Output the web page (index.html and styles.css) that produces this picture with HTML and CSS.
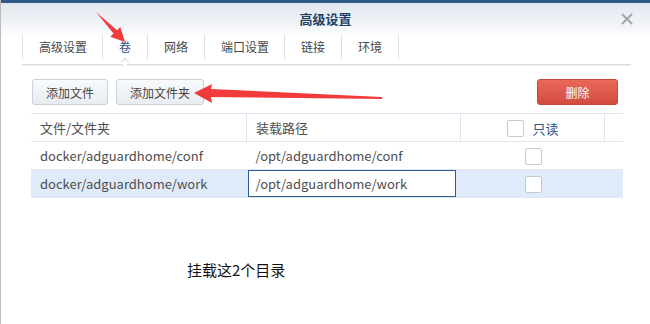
FILE: index.html
```html
<!DOCTYPE html>
<html lang="zh-CN">
<head>
    <meta charset="UTF-8">
    <meta name="viewport" content="width=device-width, initial-scale=1.0">
    <title>高级设置</title>
    <link rel="stylesheet" href="styles.css">
</head>
<body>
    <div class="win">
        <div class="win_bar"></div>
        <div class="win_head">
            <h1 class="win_title">高级设置</h1>
            <a href="#" class="win_close">
                <svg width="14" height="14" viewBox="0 0 14 14"><path d="M2 2 L12 12 M12 2 L2 12" stroke="#a3a7ad" stroke-width="2" fill="none"/></svg>
            </a>
        </div>

        <ul class="tab_lst">
            <li class="wide"><a href="#">高级设置</a></li>
            <li class="is_on"><a href="#">卷</a></li>
            <li><a href="#">网络</a></li>
            <li class="wide"><a href="#">端口设置</a></li>
            <li><a href="#">链接</a></li>
            <li><a href="#">环境</a></li>
        </ul>

        <div class="tool">
            <div class="tool_left">
                <button class="btn">添加文件</button>
                <button class="btn">添加文件夹</button>
            </div>
            <button class="btn btn_del">删除</button>
        </div>

        <table class="vol_tbl">
            <thead>
                <tr>
                    <th class="c1">文件/文件夹</th>
                    <th class="c2">装载路径</th>
                    <th class="c3"><span class="chk"></span><span class="ro">只读</span></th>
                    <th class="c4"></th>
                </tr>
            </thead>
            <tbody>
                <tr>
                    <td>docker/adguardhome/conf</td>
                    <td>/opt/adguardhome/conf</td>
                    <td class="c3"><span class="chk"></span></td>
                    <td></td>
                </tr>
                <tr class="is_sel">
                    <td>docker/adguardhome/work</td>
                    <td class="edit"><div class="edit_box">/opt/adguardhome/work</div></td>
                    <td class="c3"><span class="chk"></span></td>
                    <td></td>
                </tr>
            </tbody>
        </table>

        <p class="note">挂载这2个目录</p>
    </div>

    <!-- 标注箭头 -->
    <svg class="marks" width="650" height="324" viewBox="0 0 650 324">
        <polygon points="96,12 117.1,30.2 120.3,27 125,42 110.3,36.8 113.5,33.6" fill="#f23b3b"/>
        <polygon points="382,97 382,99 211,97 212,103 194,93 212,84 211,89" fill="#f23b3b"/>
    </svg>
</body>
</html>
```

FILE: styles.css
```css
/* 초기화 */
body,ul,h1,p{margin: 0; padding: 0;}
ul{list-style: none;}
a{text-decoration: none; color: #444;}
body{
    width: 650px; height: 324px; overflow: hidden;
    background: #fff; position: relative;
    font-family: "Noto Sans CJK SC", "Noto Sans", sans-serif;
    color: #4a4a4a;
}

/* 창 */
.win{height: 324px; border-left: 1px solid #bcbcbc; box-sizing: border-box;}
.win_bar{height: 3px; background-color: #2f5a8a;}
.win_head{
    height: 32px; position: relative;
    display: flex; align-items: center; justify-content: center;
    background: linear-gradient(#e1e7ef, #fafbfc);
}
.win_title{font-size: 13px; font-weight: 600; color: #213f66; line-height: 32px;}
.win_close{position: absolute; right: 16px; top: 9px; display: block; width: 14px; height: 14px;}
.win_close svg{display: block;}

/* 탭 */
.tab_lst{
    display: flex; margin: 0 19px 0 21px; padding-bottom: 5px;
    border-bottom: 1px solid #d6dbe1;
    box-shadow: 0 1px 0 #eef0f3;
}
.tab_lst li{border-left: 1px solid #d7dee7; position: relative;}
.tab_lst li:last-child{border-right: 1px solid #d7dee7;}
.tab_lst li a{display: block; padding: 0 16px; line-height: 24px; font-size: 12px; color: #474747;}
.tab_lst li.wide a{padding: 0 15px 0 16px;}
.tab_lst li.is_on a{color: #24518a;}
.tab_lst li.is_on::after{
    content: ""; position: absolute; left: 50%; bottom: -6px;
    width: 5px; height: 5px; margin-left: -3px;
    background: #fff; border-left: 1px solid #d6dbe1; border-top: 1px solid #d6dbe1;
    transform: rotate(45deg);
}

/* 버튼 */
.tool{display: flex; justify-content: space-between; margin: 14px 32px 0 31px;}
.tool_left{display: flex; gap: 8px;}
.btn{
    height: 26px; padding: 0 13px; font-family: inherit; font-size: 12px; color: #454545;
    border: 1px solid #c8d1db; border-radius: 3px;
    background: linear-gradient(#f8fafc, #e8edf2);
}
.btn_del{
    width: 81px; color: #fff; border-color: #c7443a;
    background: linear-gradient(#e9695b, #d24c3e);
}

/* 표 */
.vol_tbl{
    margin: 8px 0 0 30px; width: 590px; border-collapse: collapse;
    font-size: 13px; table-layout: fixed;
}
.vol_tbl th, .vol_tbl td{
    height: 27px; padding: 0 0 0 9px; text-align: left; font-weight: normal;
    border-bottom: 1px solid #e1e7ee; white-space: nowrap; color: #4e4e4e;
}
.vol_tbl thead th{border-top: 1px solid #dbe3ec;}
.vol_tbl .c1{width: 206px;}
.vol_tbl .c2{width: 204px; border-left: 1px solid #dde5ee;}
.vol_tbl .c3{width: 142px; padding: 0; text-align: center;}
.vol_tbl th.c3{border-left: 1px solid #dde5ee; border-right: 1px solid #dde5ee;}
.vol_tbl .c4{width: 18px; padding: 0;}
.vol_tbl td.c3{padding-left: 1px;}
.chk{
    display: inline-block; width: 15px; height: 15px; vertical-align: middle;
    border: 1px solid #c3cad4; border-radius: 2px; background: #fff;
}
.ro{vertical-align: middle; margin-left: 8px; color: #2a5188;}
.vol_tbl th.c3{padding-right: 0; padding-left: 1px;}
.is_sel td{background-color: #dfebfa;}
.vol_tbl td.edit{padding: 0;}
.edit_box{
    height: 25px; line-height: 25px; padding-left: 7px; margin-left: 1px; width: 199px;
    border: 1px solid #2c5a8e; background: #fff;
}

/* 주석 */
.note{margin: 61px 0 0 186px; font-size: 15px; color: #111;}
.marks{position: absolute; left: 0; top: 0; pointer-events: none;}
```
